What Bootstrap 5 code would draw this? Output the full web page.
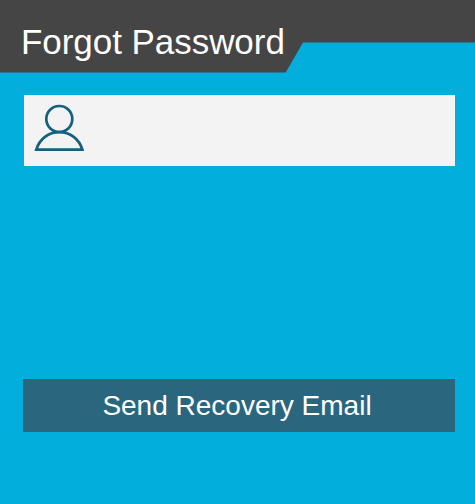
<!DOCTYPE html>
<html lang="en">
<head>
<meta charset="utf-8">
<meta name="viewport" content="width=device-width, initial-scale=1">
<title>Forgot Password</title>
<link href="https://cdn.jsdelivr.net/npm/bootstrap@5.3.0/dist/css/bootstrap.min.css" rel="stylesheet">
<style>
body{background:#02aedb;font-family:"Liberation Sans",Arial,sans-serif;height:504px;overflow:hidden}
.page-head{height:73px;background:#454545;clip-path:polygon(0 0,100% 0,100% 42.4px,303px 42.4px,285.700px 72.400px,0 72.400px);padding:22px 0 0 21px}
.page-title{font-size:35px;line-height:40px;font-weight:400;color:#fff;letter-spacing:-.05px}
.recovery-form{padding:22px 20px 0 24px}
.user-field{height:71px;background:#f3f3f3;padding:9px 10px}
.user-field input{font-size:26px}
.send-btn,.send-btn:hover{height:53px;margin:213px 0 0 -1px;background:#2a677f;color:#fff;font-size:28px;line-height:53px}
.send-btn{padding:0 4px 0 0}
</style>
</head>
<body>
<header class="page-head"><h1 class="page-title m-0 text-nowrap">Forgot Password</h1></header>
<form class="recovery-form d-flex flex-column">
<label class="user-field d-flex align-items-start">
<svg width="50" height="48" viewBox="0 0 50 48" fill="none" stroke="#14607f" stroke-width="2.7" class="flex-shrink-0"><circle cx="25.300" cy="15" r="13"/><path d="M2.300 45.700C5.500 35 14.500 28.200 25.300 28.200S45.200 35 48.400 45.700Z"/></svg>
<input type="text" class="flex-grow-1 border-0 bg-transparent shadow-none" aria-label="Email">
</label>
<button type="button" class="send-btn btn rounded-0 border-0">Send Recovery Email</button>
</form>
<script src="https://cdn.jsdelivr.net/npm/bootstrap@5.3.0/dist/js/bootstrap.bundle.min.js"></script>
</body>
</html>
